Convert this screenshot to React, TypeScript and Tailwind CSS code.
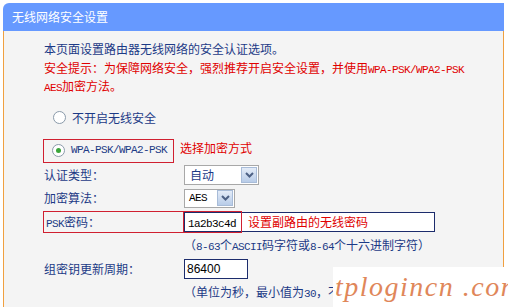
import React from 'react';

const cjk = "'Noto Sans CJK SC', 'Liberation Sans', sans-serif";
const mono = "'Liberation Mono', 'Noto Sans CJK SC', monospace";

const Mono = ({ children }: { children: React.ReactNode }) => (
    <span className="text-[11px] leading-none tracking-[-0.6px]" style={{ fontFamily: mono }}>{children}</span>
);

const Radio = ({ checked = false }: { checked?: boolean }) => (
    <span className="flex h-[13px] w-[13px] items-center justify-center rounded-full border border-[#8a9aaa] bg-white">
        {checked && <span className="h-[5px] w-[5px] rounded-full bg-[#3aa53a]" />}
    </span>
);

const Arrow = () => (
    <span className="flex h-[16px] w-[16px] items-center justify-center border border-[#a8bcd8] bg-gradient-to-b from-[#e4ecf8] to-[#b8cce8]">
        <svg width="9" height="6" viewBox="0 0 9 6">
            <path d="M1 1 L4.5 4.5 L8 1" stroke="#4d6185" strokeWidth="2" fill="none" />
        </svg>
    </span>
);

const Row = ({ label, children, className = '' }: { label: React.ReactNode; children: React.ReactNode; className?: string }) => (
    <div className={`flex items-center ${className}`}>
        <div className="w-[140px] shrink-0">{label}</div>
        {children}
    </div>
);

export default function App() {
    return (
        <div className="relative h-[307px] w-[508px] overflow-hidden bg-white text-[12px] text-[#1c3a86]" style={{ fontFamily: cjk }}>
            <div className="ml-[3px] mt-[3px] w-[501px]">
                {/* Title bar */}
                <div className="flex h-[28px] items-center rounded-tl-[6px] bg-[#6699ff] pl-[9px] text-[12px] text-white">
                    无线网络安全设置
                </div>

                {/* Body */}
                <div className="h-[280px] border-x border-[#f0a040] bg-[#f4f4f4] pl-[40px] pt-[9px]">
                    <div className="leading-[18.5px]">
                        <div className="h-[18.5px]">本页面设置路由器无线网络的安全认证选项。</div>
                        <div className="h-[18.5px] text-[#e00000]">
                            安全提示：为保障网络安全，强烈推荐开启安全设置，并使用<Mono>WPA-PSK/WPA2-PSK</Mono>
                        </div>
                        <div className="h-[18.5px] text-[#e00000]"><Mono>AES</Mono>加密方法。</div>
                    </div>

                    <div className="mt-[13px] flex h-[18px] items-center gap-[6px] pl-[9px]">
                        <Radio />
                        <span>不开启无线安全</span>
                    </div>

                    <div className="mt-[12px] flex items-center">
                        <div className="-ml-[1px] flex h-[24px] w-[131px] items-center gap-[6px] border border-[#d02030] pl-[8px]">
                            <Radio checked />
                            <Mono>WPA-PSK/WPA2-PSK</Mono>
                        </div>
                        <span className="ml-[6px] -mt-[5px] text-[#e00000]">选择加密方式</span>
                    </div>

                    <Row label="认证类型：" className="mt-[2px] h-[21px]">
                        <div className="flex h-[20px] w-[75px] items-center justify-between border border-[#a8a8a8] bg-white pl-[5px] pr-[1px]">
                            <span>自动</span>
                            <Arrow />
                        </div>
                    </Row>

                    <Row label="加密算法：" className="mt-[3px] h-[19px]">
                        <div className="flex h-[19px] w-[51px] items-center justify-between border border-[#a8a8a8] bg-white pl-[4px] pr-[1px] text-black">
                            <Mono>AES</Mono>
                            <Arrow />
                        </div>
                    </Row>

                    <div className="relative mt-[3px] flex h-[22px] items-center">
                        <div className="-ml-[1px] flex h-[22px] w-[199px] items-center border border-[#d02030] pl-[2px]">
                            <span><Mono>PSK</Mono>密码：</span>
                        </div>
                        <div className="absolute left-[140px] top-[1px] flex h-[20px] w-[251px] items-center border border-[#1c2c6c] bg-white pl-[3px]">
                            <span className="text-black"><Mono>1a2b3c4d</Mono></span>
                            <span className="ml-[12px] text-[#e00000]">设置副路由的无线密码</span>
                        </div>
                        <div className="absolute left-[139px] top-0 h-[22px] w-[59px] border border-[#d02030]" />
                    </div>

                    <div className="ml-[140px] mt-[3px] flex h-[19px] items-center">
                        <span>（<Mono>8-63</Mono>个<Mono>ASCII</Mono>码字符或<Mono>8-64</Mono>个十六进制字符）</span>
                    </div>

                    <Row label="组密钥更新周期：" className="mt-[4px] h-[21px]">
                        <div className="flex h-[20px] w-[64px] items-center border border-[#1c2c6c] bg-white pl-[2px] text-black" style={{ fontFamily: "'Liberation Sans', sans-serif" }}>
                            86400
                        </div>
                    </Row>

                    <div className="ml-[140px] mt-[3px] whitespace-nowrap">
                        （单位为秒，最小值为<Mono>30</Mono>，不更新则为<Mono>0</Mono>）
                    </div>
                </div>
            </div>

            {/* Watermark */}
            <div className="absolute left-[333px] top-[267px] h-[40px] w-[175px] whitespace-nowrap bg-white pl-[2px] pt-[3px] text-[28px] italic leading-[34px] tracking-[1.5px] text-[#e0875a]" style={{ fontFamily: "'Liberation Serif', serif" }}>
                tplogincn .com
            </div>
        </div>
    );
}
